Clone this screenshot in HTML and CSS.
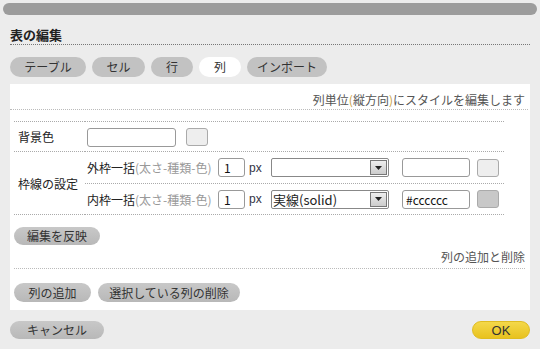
FILE: index.html
```html
<!DOCTYPE html>
<html lang="ja">
<head>
    <meta charset="UTF-8">
    <title>表の編集</title>
    <link rel="stylesheet" href="styles.css">
</head>
<body>

<div class="titlebar"></div>

<div class="dialog">
    <h1>表の編集</h1>

    <!-- tabs -->
    <div class="tabs">
        <span class="tab w76">テーブル</span>
        <span class="tab w53">セル</span>
        <span class="tab w42">行</span>
        <span class="tab w42 active">列</span>
        <span class="tab w80">インポート</span>
    </div>

    <div class="panel">
        <div class="section-head">列単位<span class="paren">(</span><span class="hint">縦方向</span><span class="paren">)</span>にスタイルを編集します</div>

        <table class="form">
            <tr class="row-bg">
                <th>背景色</th>
                <td>
                    <input type="text" class="color-input wide">
                    <span class="swatch"></span>
                </td>
            </tr>
            <tr class="row-outer">
                <th rowspan="2">枠線の設定</th>
                <td>
                    <div class="line">
                        <span class="sub-label">外枠一括<span class="muted">(太さ-種類-色)</span></span>
                        <input type="text" class="num" value="1">
                        <span class="unit">px</span>
                        <div class="select">
                            <span class="select-value"></span>
                            <span class="select-btn"><svg width="7" height="4" viewBox="0 0 7 4"><path d="M0 0h7L3.5 4z" fill="#222"/></svg></span>
                        </div>
                        <input type="text" class="color-input">
                        <span class="swatch"></span>
                    </div>
                </td>
            </tr>
            <tr class="row-inner">
                <td>
                    <div class="line">
                        <span class="sub-label">内枠一括<span class="muted">(太さ-種類-色)</span></span>
                        <input type="text" class="num" value="1">
                        <span class="unit">px</span>
                        <div class="select">
                            <span class="select-value">実線(solid)</span>
                            <span class="select-btn"><svg width="7" height="4" viewBox="0 0 7 4"><path d="M0 0h7L3.5 4z" fill="#222"/></svg></span>
                        </div>
                        <input type="text" class="color-input" value="#cccccc">
                        <span class="swatch dark"></span>
                    </div>
                </td>
            </tr>
        </table>

        <button class="btn w86 apply">編集を反映</button>

        <div class="section-head second">列の追加と削除</div>

        <div class="btn-row">
            <button class="btn w77">列の追加</button>
            <button class="btn w142">選択している列の削除</button>
        </div>
    </div>

    <div class="footer">
        <button class="btn w94">キャンセル</button>
        <button class="btn ok">OK</button>
    </div>
</div>

</body>
</html>
```

FILE: styles.css
```css
body {
    margin: 0;
    background-color: #ececec;
    font-family: "Noto Sans CJK JP", "Liberation Sans", sans-serif;
    font-size: 12px;
    color: #222;
}
.titlebar {
    margin: 3px 3px 0 3px;
    height: 12px;
    background-color: #9c9c9c;
    border-radius: 6px;
}
.dialog {
    padding: 0 10px;
}
h1 {
    margin: 0;
    padding-top: 11px;
    height: 18px;
    line-height: 18px;
    font-size: 13px;
    font-weight: bold;
    color: #222;
    border-bottom: 1px dotted #777;
}

/* tabs */
.tabs {
    display: flex;
    gap: 6px;
    margin-top: 12px;
    height: 20px;
}
.tab {
    display: block;
    height: 20px;
    line-height: 20px;
    text-align: center;
    background-color: #c2c2c2;
    border-radius: 10px;
    color: #333;
}
.tab.active {
    background-color: #fff;
}
.w42 { width: 42px; }
.w53 { width: 53px; }
.w76 { width: 76px; }
.w77 { width: 77px; }
.w80 { width: 80px; }
.w86 { width: 86px; }
.w94 { width: 94px; }
.w142 { width: 142px; }

/* panel */
.panel {
    margin-top: 7px;
    background-color: #fff;
    height: 226px;
    padding-left: 4px;
}
.section-head {
    margin-left: -4px;
    margin-right: 2px;
    padding: 7px 3px 0 0;
    height: 18px;
    line-height: 18px;
    text-align: right;
    color: #555;
    border-bottom: 1px dotted #bbb;
}
.section-head .paren { color: #c9a040; }
.section-head .hint { color: #555; }
.section-head.second {
    margin-left: 0;
    margin-right: 5px;
    padding-top: 3px;
    padding-right: 0;
    height: 20px;
}

table.form {
    margin-top: 11px;
    width: 490px;
    border-collapse: collapse;
}
table.form th {
    width: 67px;
    padding: 0 0 0 4px;
    text-align: left;
    font-weight: normal;
    color: #222;
    border-bottom: 1px dotted #aaa;
}
table.form td {
    padding: 0 0 0 2px;
    border-bottom: 1px dotted #aaa;
}
table.form tr:first-child th,
table.form tr:first-child td {
    border-top: 1px dotted #aaa;
}
.row-bg td, .row-bg th { height: 29px; }
.row-outer td { height: 31px; }
.row-inner td { height: 30px; }

.line {
    display: flex;
    align-items: center;
}
.sub-label {
    width: 131px;
    color: #222;
}
.muted { color: #999; }

input {
    font-family: inherit;
    font-size: 12px;
    box-sizing: border-box;
    height: 19px;
    border: 1px solid #999;
    border-radius: 3px;
    padding: 0 3px;
    margin: 0;
    color: #111;
    background-color: #fff;
}
.num {
    width: 27px;
    padding-left: 5px;
}
.unit {
    width: 26px;
    padding-left: 4px;
    box-sizing: border-box;
    color: #334;
    font-family: "Liberation Sans", sans-serif;
}
.color-input {
    width: 68px;
}
.color-input.wide {
    width: 89px;
    vertical-align: middle;
}
.swatch {
    display: inline-block;
    box-sizing: border-box;
    width: 22px;
    height: 18px;
    margin-left: 7px;
    border: 1px solid #aaa;
    border-radius: 3px;
    background-color: #eee;
    vertical-align: middle;
}
.swatch.dark { background-color: #c8c8c8; }

.select {
    display: flex;
    box-sizing: border-box;
    width: 118px;
    height: 19px;
    margin-right: 13px;
    border: 1px solid #888;
    border-radius: 2px;
    background-color: #fff;
}
.select-value {
    flex: 1;
    line-height: 17px;
    padding-left: 1px;
    font-size: 13px;
}
.select-btn {
    display: flex;
    align-items: center;
    justify-content: center;
    width: 15px;
    margin: 1px;
    border: 1px solid #777;
    background: linear-gradient(#eee, #ccc);
}

/* buttons */
.btn {
    display: block;
    height: 18px;
    padding: 0;
    border: none;
    border-radius: 9px;
    background: linear-gradient(#c8c8c8, #b8b8b8);
    font-family: inherit;
    font-size: 12px;
    line-height: 18px;
    color: #333;
}
.apply {
    margin-top: 12px;
}
.btn-row {
    display: flex;
    gap: 7px;
    margin-top: 14px;
}
.btn-row .btn { height: 19px; border-radius: 10px; }
.footer {
    display: flex;
    justify-content: space-between;
    margin-top: 11px;
}
.btn.ok {
    width: 58px;
    background: linear-gradient(#f4d84a, #e8c21e);
    border: 1px solid #e0bc20;
    color: #333;
    font-family: "Liberation Sans", sans-serif;
    font-size: 13px;
}
```
